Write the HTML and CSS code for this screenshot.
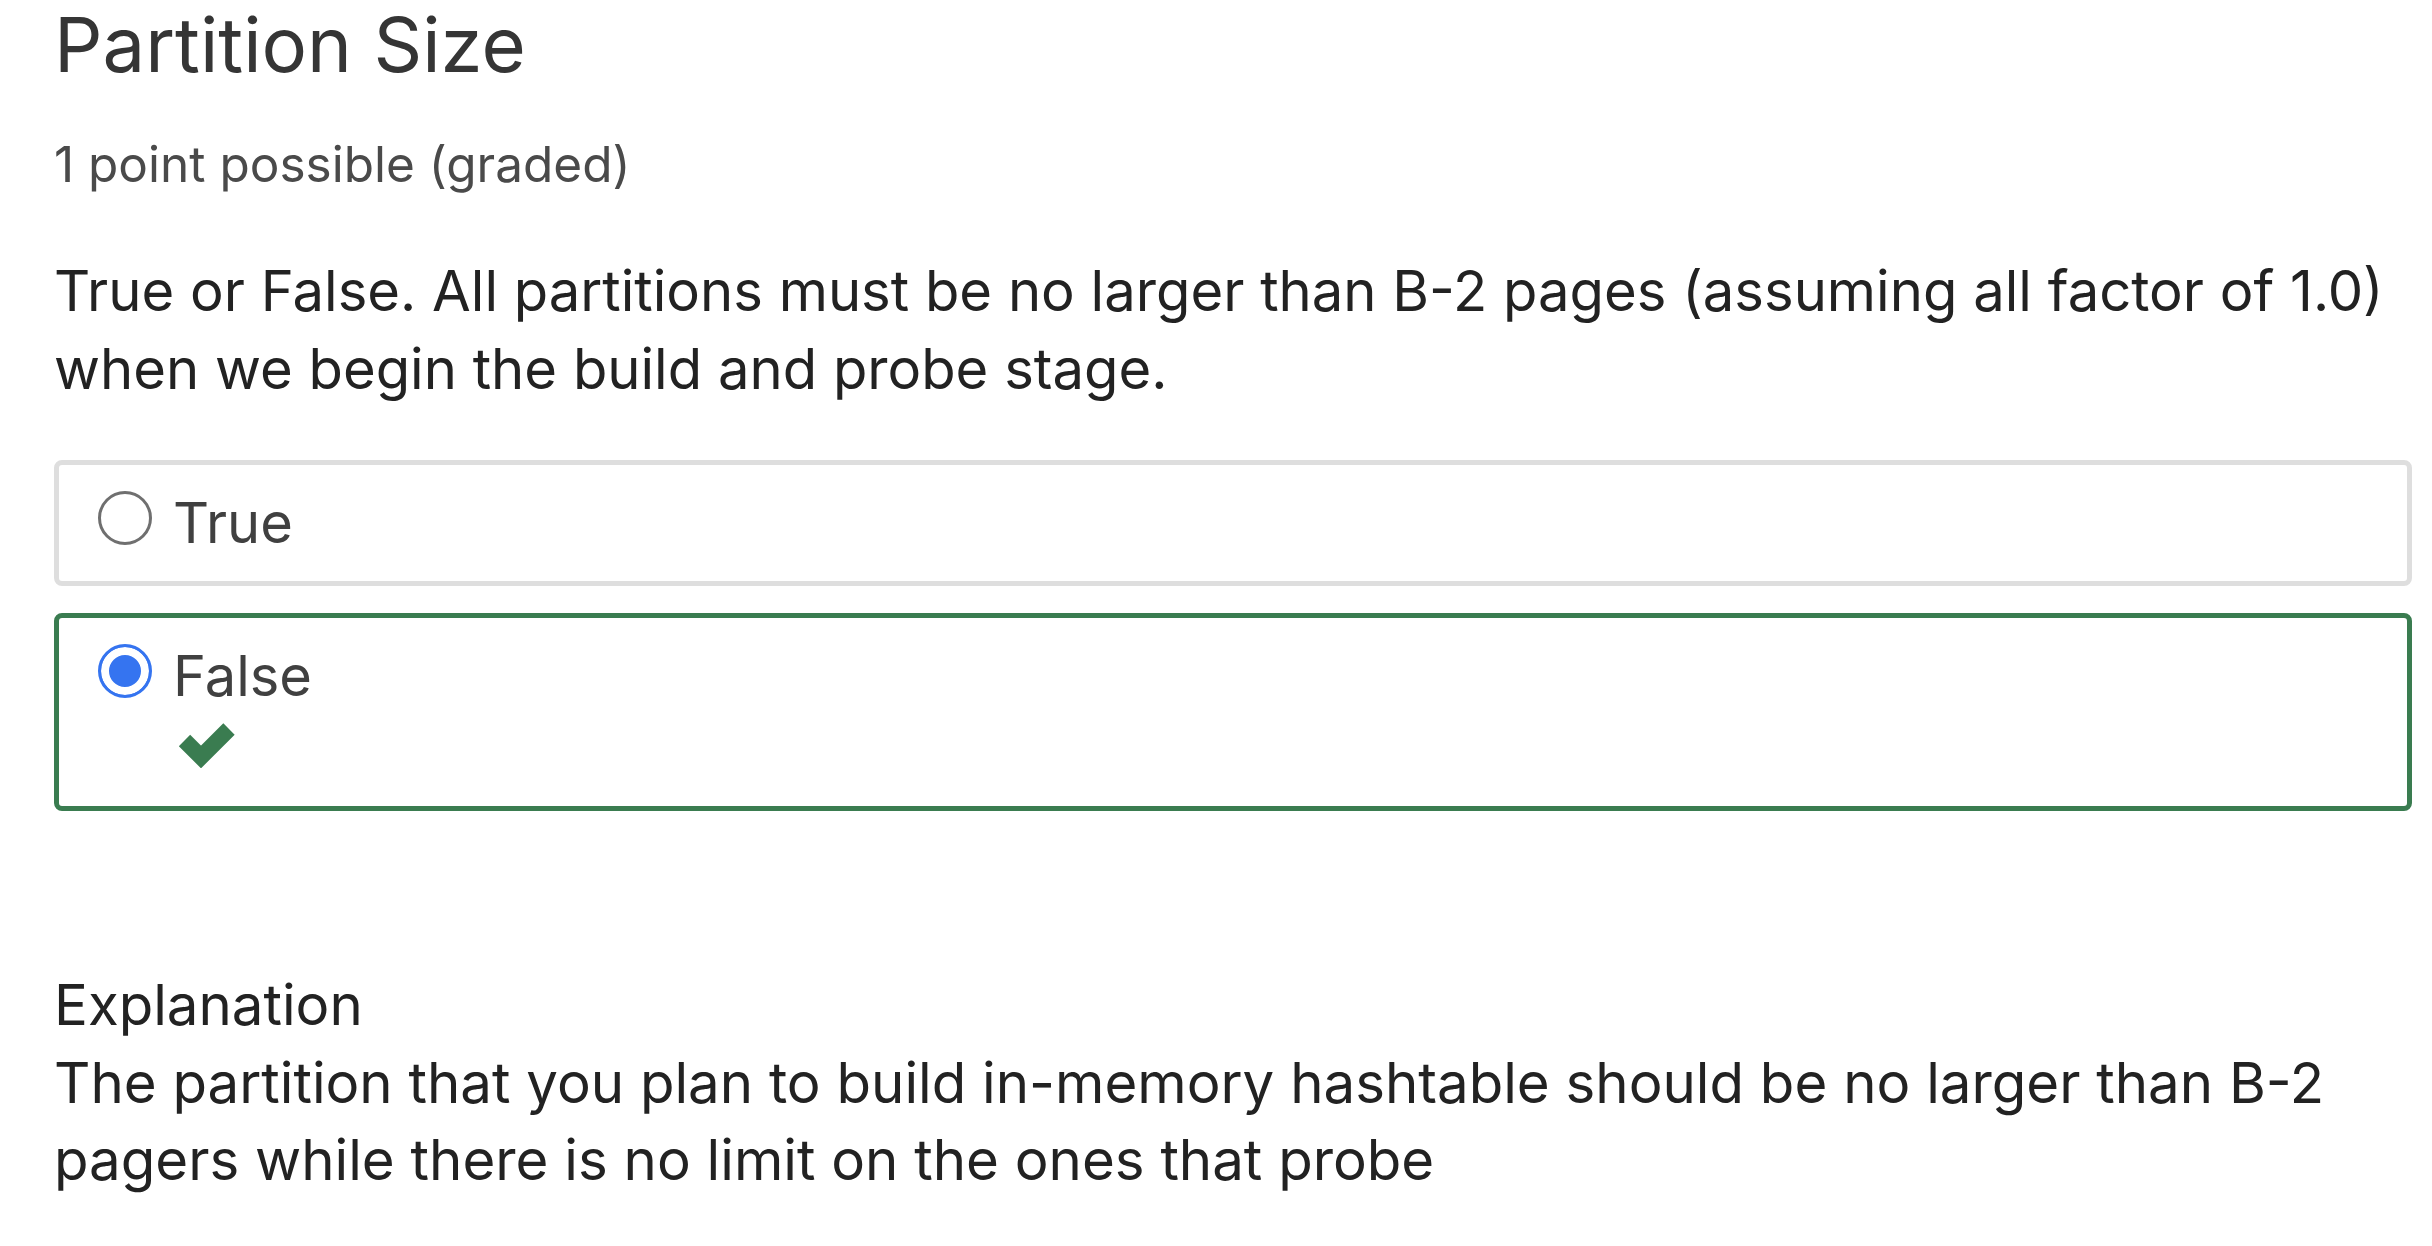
FILE: index.html
```html
<!DOCTYPE html>
<html lang="en">
<head>
<meta charset="utf-8">
<title>Partition Size</title>
<link rel="stylesheet" href="styles.css">
</head>
<body>
<main class="problem">
  <h2 class="problem-title">Partition Size</h2>
  <div class="problem-progress">1 point possible (graded)</div>
  <p class="question">True or False. All partitions must be no larger than B-2 pages (assuming all factor of 1.0) when we begin the build and probe stage.</p>
  <div class="choices">
    <label class="choice">
      <span class="choice-row">
        <span class="radio"></span>
        <span class="choice-text">True</span>
      </span>
    </label>
    <label class="choice choice-correct">
      <span class="choice-row">
        <span class="radio radio-checked"></span>
        <span class="choice-text">False</span>
      </span>
      <svg class="check" viewBox="0 0 60 45" width="60" height="45" aria-hidden="true">
        <polyline points="6.5,17.5 23,34 51,6" fill="none" stroke="#3a7c50" stroke-width="16" stroke-linejoin="miter" stroke-linecap="butt"/>
      </svg>
    </label>
  </div>
  <section class="explanation">
    <div class="explanation-title">Explanation</div>
    <p class="explanation-text">The partition that you plan to build in-memory hashtable should be no larger than B-2 pagers while there is no limit on the ones that probe</p>
  </section>
</main>
</body>
</html>
```

FILE: styles.css
```css
html, body {
  margin: 0;
  padding: 0;
  background: #ffffff;
}

body {
  font-family: Inter, "Noto Sans", "Liberation Sans", sans-serif;
}

.problem {
  padding: 0 20px 0 54px;
}

.problem-title {
  margin: 0;
  font-size: 76px;
  line-height: 89px;
  font-weight: 400;
  color: #353535;
}

.problem-progress {
  margin-top: 45px;
  font-size: 49.5px;
  line-height: 60px;
  color: #4a4a4a;
}

.question {
  margin: 58px 0 0;
  font-size: 56.2px;
  line-height: 78px;
  color: #222222;
}

.choices {
  margin-top: 52px;
  display: flex;
  flex-direction: column;
  gap: 27px;
}

.choice {
  display: flex;
  flex-direction: column;
  border: 5px solid #dedede;
  border-radius: 8px;
  padding: 25px 39px;
}

.choice-correct {
  border-color: #3a7c50;
  padding-bottom: 38px;
}

.choice-row {
  display: flex;
  align-items: flex-start;
  gap: 21px;
}

.radio {
  box-sizing: border-box;
  width: 54px;
  height: 54px;
  margin-top: 1px;
  border-radius: 50%;
  border: 3px solid #6f6f6f;
  background: #ffffff;
  flex: none;
}

.radio-checked {
  border-color: #3574f0;
  background: #3574f0;
  box-shadow: inset 0 0 0 8px #ffffff;
}

.choice-text {
  font-size: 56px;
  line-height: 66px;
  color: #404040;
}

.check {
  display: block;
  margin: 14px 0 0 80px;
}

.explanation {
  margin-top: 155px;
  color: #222222;
  font-size: 56.4px;
  line-height: 77.5px;
}

.explanation-title {
  font-weight: 400;
}

.explanation-text {
  margin: 0;
}
```
